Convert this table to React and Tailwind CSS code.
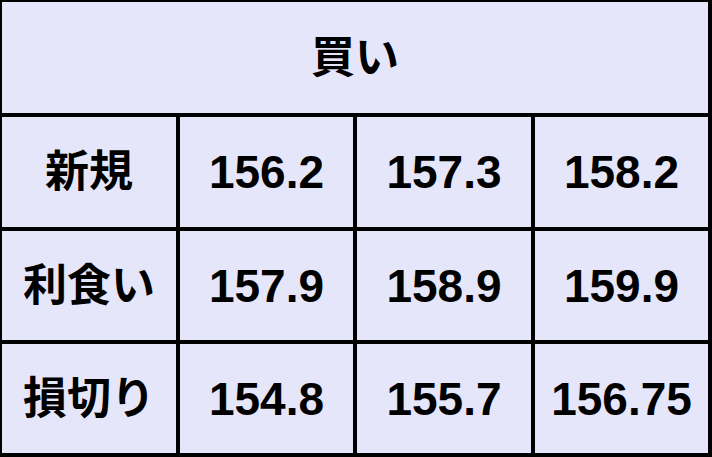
const ROWS = [
  { label: '新規', values: ['156.2', '157.3', '158.2'] },
  { label: '利食い', values: ['157.9', '158.9', '159.9'] },
  { label: '損切り', values: ['154.8', '155.7', '156.75'] },
];

const font = { fontFamily: '"Liberation Sans", "Noto Sans CJK JP", sans-serif' };

function Cell({ children, label }) {
  return (
    <div
      className={
        label
          ? 'flex items-center justify-center bg-[#e6e6fa] text-[44px] font-semibold text-black leading-none'
          : 'flex items-center justify-center bg-[#e6e6fa] text-[46px] font-bold text-black leading-none'
      }
    >
      {children}
    </div>
  );
}

export default function App() {
  return (
    <div
      className="w-[712px] h-[457px] bg-black pt-[2px] pl-[2px] pr-[4px] pb-[4px]"
      style={font}
    >
      <div className="grid h-full grid-cols-[174px_173px_174px_173px] grid-rows-[111px_110px_109px_109px] gap-[4px]">
        <div className="col-span-4 flex items-center justify-center bg-[#e6e6fa] text-[44px] font-semibold text-black leading-none">
          買い
        </div>
        {ROWS.map((row) => (
          <>
            <Cell key={row.label} label>{row.label}</Cell>
            {row.values.map((v) => (
              <Cell key={row.label + v}>{v}</Cell>
            ))}
          </>
        ))}
      </div>
    </div>
  );
}
